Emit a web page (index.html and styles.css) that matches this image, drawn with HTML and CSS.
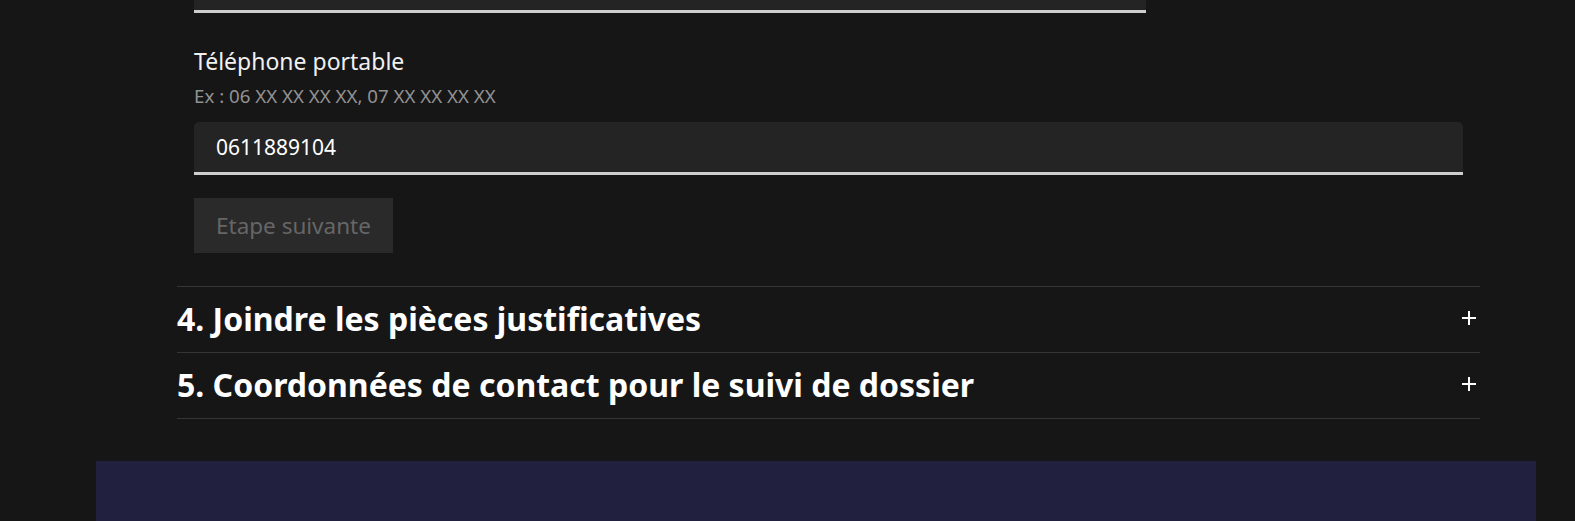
FILE: index.html
```html
<!DOCTYPE html>
<html lang="fr">
<head>
    <meta charset="UTF-8">
    <meta name="viewport" content="width=device-width, initial-scale=1.0">
    <title>Demande - étapes</title>
    <link rel="stylesheet" href="styles.css">
</head>
<body>
    <div class="page">
        <main class="main">
            <section class="accordion">
                <div class="collapse">
                    <div class="field field-email">
                        <input class="input" type="email" name="email" value="">
                    </div>

                    <div class="field">
                        <label class="label" for="mobile">Téléphone portable</label>
                        <span class="hint">Ex : 06 XX XX XX XX, 07 XX XX XX XX</span>
                        <input class="input" type="tel" id="mobile" name="mobile" value="0611889104">
                    </div>

                    <button class="btn" type="button" disabled>Etape suivante</button>
                </div>

                <div class="acc-item">
                    <h3 class="acc-title">
                        <button class="acc-btn" type="button">
                            <span>4. Joindre les pièces justificatives</span>
                            <svg class="plus" width="14" height="14" viewBox="0 0 14 14"><path d="M7 0v14M0 7h14" stroke="#fff" stroke-width="2"/></svg>
                        </button>
                    </h3>
                </div>

                <div class="acc-item">
                    <h3 class="acc-title">
                        <button class="acc-btn" type="button">
                            <span>5. Coordonnées de contact pour le suivi de dossier</span>
                            <svg class="plus" width="14" height="14" viewBox="0 0 14 14"><path d="M7 0v14M0 7h14" stroke="#fff" stroke-width="2"/></svg>
                        </button>
                    </h3>
                </div>
            </section>
        </main>

        <footer class="footer"></footer>
    </div>
</body>
</html>
```

FILE: styles.css
```css
body {
    margin: 0;
    background-color: #161616;
    color: #cecece;
    font-family: "Noto Sans", Lato, sans-serif;
    overflow: hidden;
}

.page {
    width: 1440px;
    margin-left: 96px;
}

.main {
    padding: 0 56px 42px 81px;
}

.accordion {
    border-bottom: 1px solid #353535;
}

.collapse {
    margin-top: -40px;
    padding: 0 17px 33px 17px;
}

.field {
    display: flex;
    flex-direction: column;
}

.field-email {
    width: 952px;
    margin-bottom: 34px;
}

.label {
    color: #f0f0f0;
    font-size: 23px;
    line-height: 28px;
}

.hint {
    color: #929292;
    font-size: 18.7px;
    line-height: 24px;
    margin-top: 9px;
}

.input {
    margin-top: 14px;
    height: 53px;
    box-sizing: border-box;
    padding: 0 22px;
    border: none;
    border-bottom: 3px solid #cecece;
    border-radius: 5px 5px 0 0;
    background-color: #242424;
    color: #ffffff;
    font-family: inherit;
    font-size: 21px;
    outline: none;
}

.field-email .input {
    margin-top: 0;
}

.btn {
    margin-top: 23px;
    height: 55px;
    padding: 0 22px;
    border: none;
    background-color: #2a2a2a;
    color: #666666;
    font-family: inherit;
    font-size: 22.5px;
}

.acc-item {
    border-top: 1px solid #353535;
}

.acc-title {
    margin: 0;
}

.acc-btn {
    display: flex;
    align-items: center;
    justify-content: space-between;
    width: 100%;
    height: 65px;
    padding: 0 4px 3px 0;
    border: none;
    background: none;
    color: #ffffff;
    font-family: inherit;
    font-size: 32px;
    font-weight: 700;
    text-align: left;
}

.plus {
    flex-shrink: 0;
}

.footer {
    height: 60px;
    background-color: #21213f;
}
```
